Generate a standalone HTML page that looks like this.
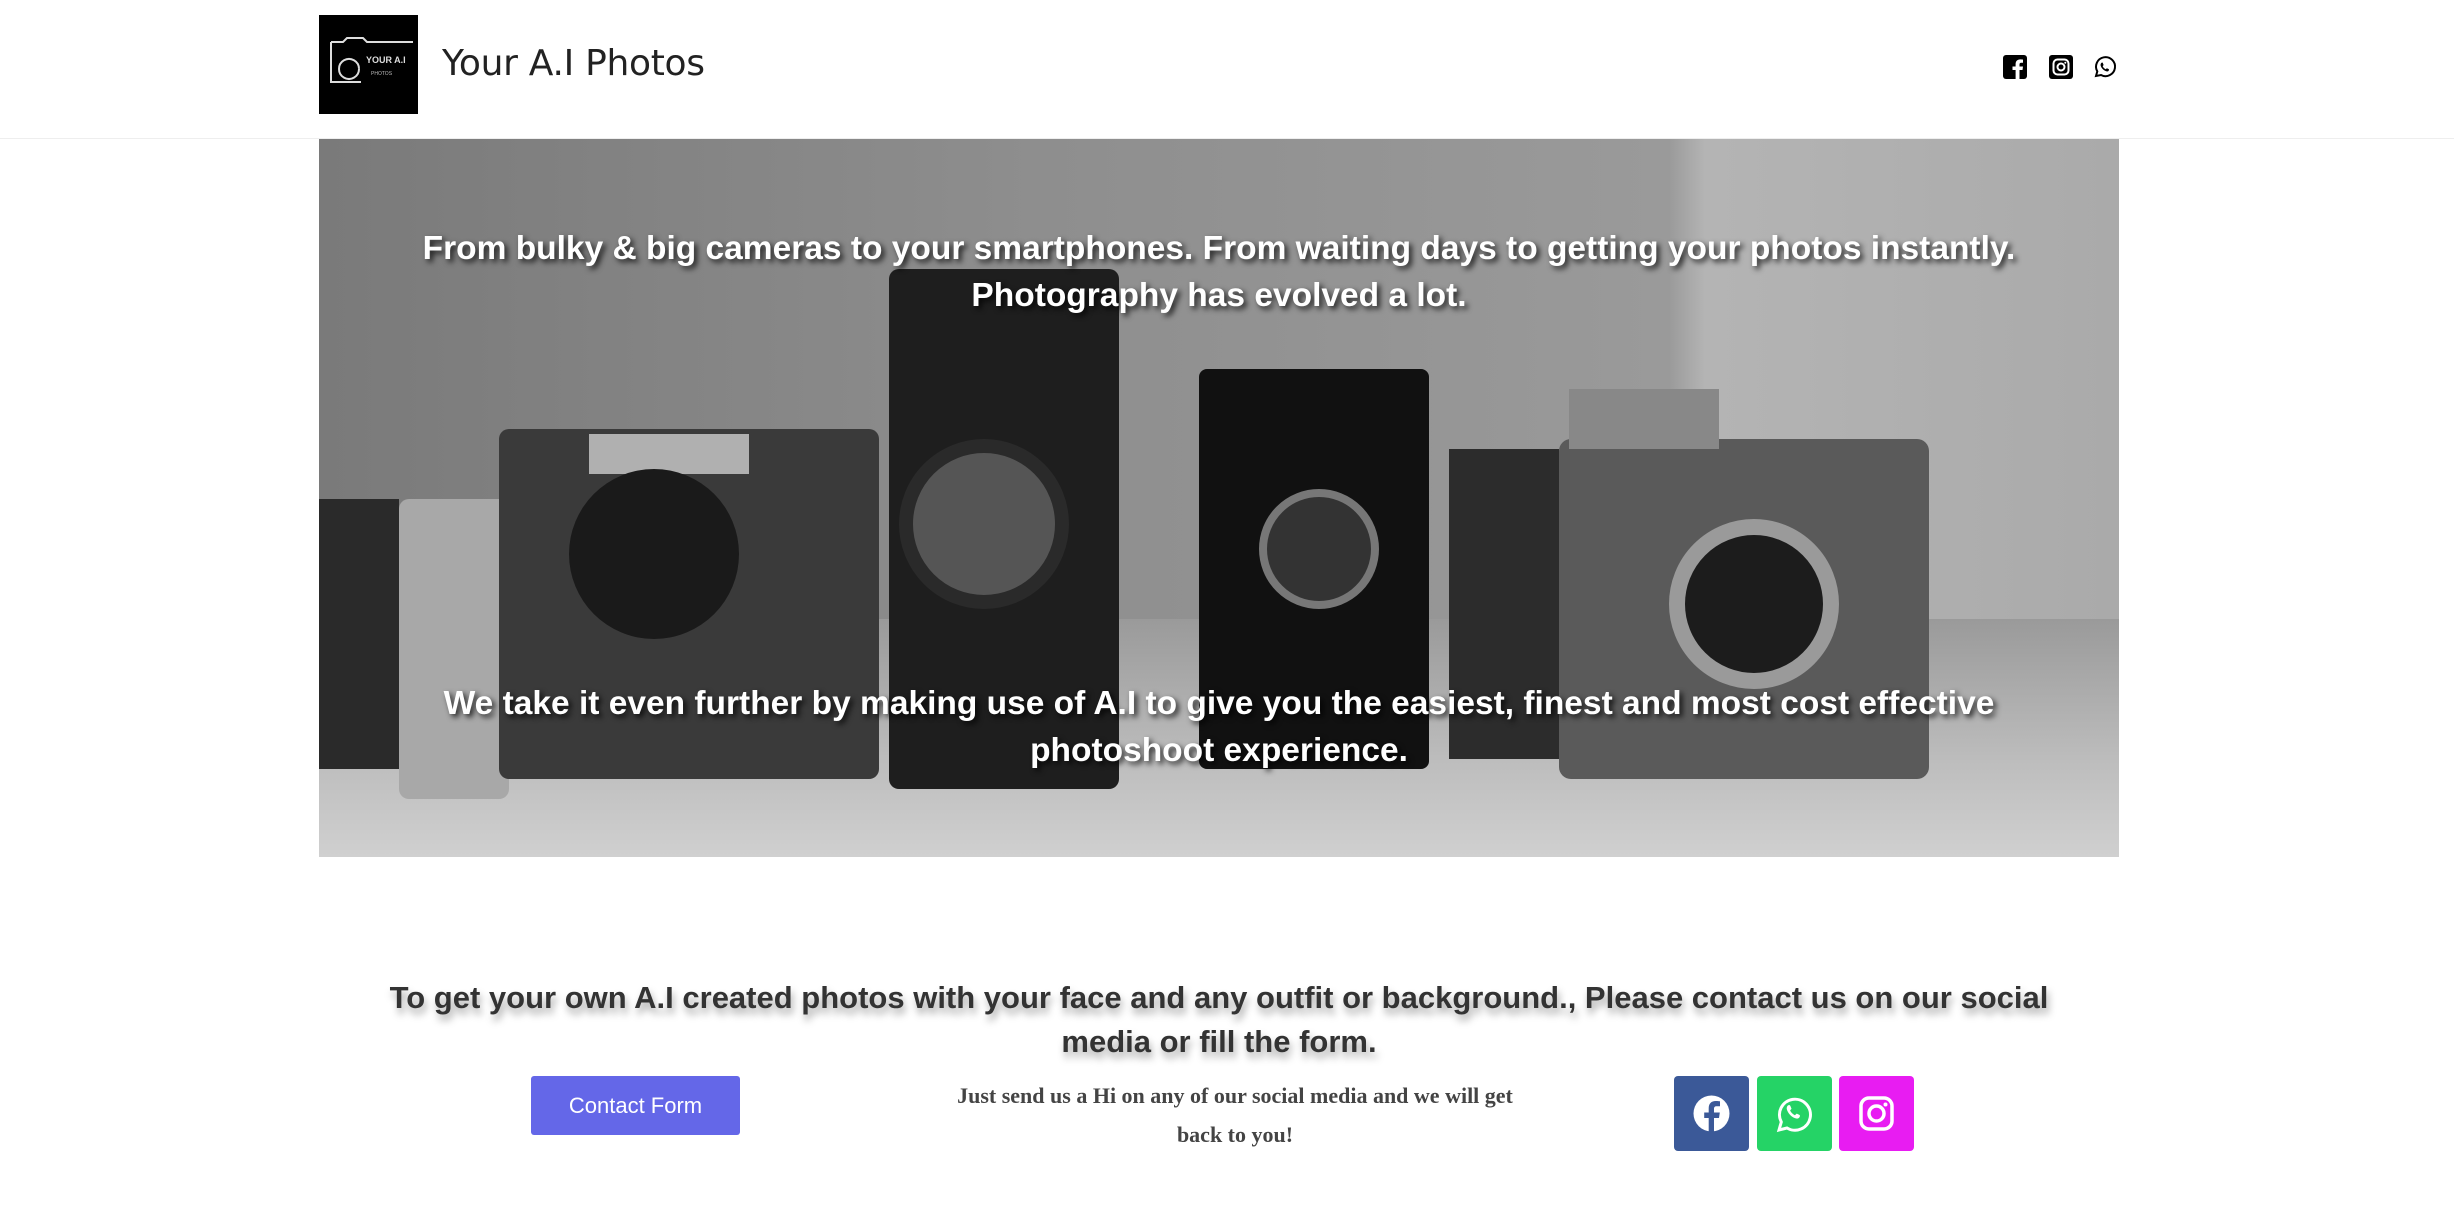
<!DOCTYPE html>
<html><head><meta charset="utf-8"><style>
*{margin:0;padding:0;box-sizing:border-box}
body{width:2454px;height:1219px;background:#fff;position:relative;overflow:hidden;font-family:"Liberation Sans",sans-serif}
.abs{position:absolute}
.hero{left:319px;top:139px;width:1800px;height:718px;overflow:hidden;
background:linear-gradient(90deg,#7a7a7a 0%,#8e8e8e 40%,#9a9a9a 75%,#b4b4b4 77%,#aaaaaa 100%)}
.ht{color:#fff;font-weight:bold;font-size:33.5px;line-height:47px;text-align:center;text-shadow:3px 3px 6px rgba(0,0,0,.8)}
.st{color:#333;font-weight:bold;font-size:31px;line-height:44px;text-align:center;text-shadow:2px 6px 8px rgba(0,0,0,.35)}
</style></head><body>
<div class="abs" style="left:319px;top:15px;width:99px;height:99px;background:#000">
<svg width="99" height="99" viewBox="0 0 99 99"><path d="M12 27h12l4-4h16l4 4h46M12 27v40h30M40 54a10 10 0 1 1 0-.1" stroke="#ddd" stroke-width="2" fill="none"/><text x="47" y="48" fill="#ddd" font-size="9" font-weight="bold" font-family="Liberation Sans">YOUR A.I</text><text x="52" y="60" fill="#bbb" font-size="5" font-family="Liberation Sans">PHOTOS</text></svg></div>
<div class="abs" style="left:442px;top:43px;font-size:36px;color:#222;font-family:'DejaVu Sans',sans-serif;letter-spacing:-0.3px">Your A.I Photos</div>
<svg class="abs" style="left:2003px;top:55px" width="24" height="24" viewBox="0 0 24 24"><rect width="24" height="24" rx="3"/><path d="M16.5 24v-9h3l.5-3.5h-3.5V9.5c0-1 .4-1.7 1.8-1.7H20V4.6c-.4 0-1.5-.2-2.8-.2-2.8 0-4.6 1.7-4.6 4.8v2.3H9.5V15h3.1v9z" fill="#fff"/></svg>
<svg class="abs" style="left:2049px;top:55px" width="24" height="24" viewBox="0 0 24 24"><rect width="24" height="24" rx="3"/><rect x="4.5" y="4.5" width="15" height="15" rx="4" fill="none" stroke="#fff" stroke-width="2"/><circle cx="12" cy="12" r="3.5" fill="none" stroke="#fff" stroke-width="2"/><circle cx="16.3" cy="7.7" r="1" fill="#fff"/></svg>
<svg class="abs" style="left:2093px;top:55px" width="24" height="24" viewBox="0 0 24 24"><path d="M3 21l1.3-4.6A9.5 9.5 0 1 1 8 20z" fill="none" stroke="#000" stroke-width="2"/><path d="M9 7.5c.5 0 .8.3 1 1l.6 1.5-.9 1.2c.6 1.3 1.8 2.5 3 3l1.2-1 1.6.8c.5.3.6.6.4 1.2-.4 1-1.3 1.4-2.3 1.2-2.8-.6-5.4-3.4-6-6-.2-1 .3-2.5 1.4-2.9z" fill="#000"/></svg>
<div class="abs" style="left:0;top:138px;width:2454px;height:1px;background:#eee"></div>
<div class="abs hero">
<div class="abs" style="left:0;top:480px;width:1800px;height:238px;background:linear-gradient(180deg,#9a9a9a,#bdbdbd 60%,#d0d0d0)"></div>
<div class="abs" style="left:0;top:360px;width:80px;height:270px;background:#2a2a2a"></div>
<div class="abs" style="left:80px;top:360px;width:110px;height:300px;background:#a8a8a8;border-radius:10px"></div>
<div class="abs" style="left:180px;top:290px;width:380px;height:350px;background:#3a3a3a;border-radius:10px"></div>
<div class="abs" style="left:270px;top:295px;width:160px;height:40px;background:#b0b0b0"></div>
<div class="abs" style="left:250px;top:330px;width:170px;height:170px;background:#1a1a1a;border-radius:50%"></div>
<div class="abs" style="left:570px;top:130px;width:230px;height:520px;background:#1e1e1e;border-radius:10px"></div>
<div class="abs" style="left:580px;top:300px;width:170px;height:170px;background:#555;border-radius:50%;border:14px solid #2a2a2a"></div>
<div class="abs" style="left:880px;top:230px;width:230px;height:400px;background:#111;border-radius:8px"></div>
<div class="abs" style="left:940px;top:350px;width:120px;height:120px;background:#333;border-radius:50%;border:8px solid #777"></div>
<div class="abs" style="left:1130px;top:310px;width:110px;height:310px;background:#2c2c2c"></div>
<div class="abs" style="left:1240px;top:300px;width:370px;height:340px;background:#5a5a5a;border-radius:12px"></div>
<div class="abs" style="left:1350px;top:380px;width:170px;height:170px;background:#1c1c1c;border-radius:50%;border:16px solid #9a9a9a"></div>
<div class="abs" style="left:1250px;top:250px;width:150px;height:60px;background:#888"></div>
</div>
<div class="abs ht" style="left:319px;top:225px;width:1800px">From bulky &amp; big cameras to your smartphones. From waiting days to getting your photos instantly.<br>Photography has evolved a lot.</div>
<div class="abs ht" style="left:319px;top:680px;width:1800px">We take it even further by making use of A.I to give you the easiest, finest and most cost effective<br>photoshoot experience.</div>
<div class="abs st" style="left:319px;top:976px;width:1800px">To get your own A.I created photos with your face and any outfit or background., Please contact us on our social<br>media or fill the form.</div>
<div class="abs" style="left:531px;top:1076px;width:209px;height:59px;background:#6467e8;border-radius:3px;color:#fff;font-size:22px;text-align:center;line-height:59px">Contact Form</div>
<div class="abs" style="left:900px;top:1076px;width:670px;text-align:center;font-family:'Liberation Serif',serif;font-weight:bold;font-size:22px;line-height:39px;color:#444">Just send us a Hi on any of our social media and we will get<br>back to you!</div>
<div class="abs" style="left:1674px;top:1076px;width:75px;height:75px;background:#3b5998;border-radius:4px"><svg width="75" height="75" viewBox="0 0 75 75"><circle cx="37.5" cy="37.5" r="18" fill="#fff"/><path d="M40 56V42h5l.8-5.5H40v-3.6c0-1.6.6-2.6 2.8-2.6H46v-5c-.6-.1-2.4-.3-4.3-.3-4.3 0-7 2.5-7 7.3v4.2h-4.5V42h4.5v14z" fill="#3b5998"/></svg></div>
<div class="abs" style="left:1757px;top:1076px;width:75px;height:75px;background:#25d366;border-radius:4px"><svg width="75" height="75" viewBox="0 0 75 75"><path d="M22 54l2.3-8A15.5 15.5 0 1 1 30 52z" fill="none" stroke="#fff" stroke-width="3"/><path d="M32 29c.8 0 1.2.5 1.5 1.3l1 2.4-1.4 1.8c1 2 2.8 3.800 4.8 4.7l1.8-1.6 2.5 1.2c.8.4.9 1 .6 1.8-.6 1.5-2 2.2-3.6 1.9-4.4-1-8.5-5.3-9.4-9.4-.3-1.6.5-3.8 2.2-4.100z" fill="#fff"/></svg></div>
<div class="abs" style="left:1839px;top:1076px;width:75px;height:75px;background:#e81cf2;border-radius:4px"><svg width="75" height="75" viewBox="0 0 75 75"><rect x="22" y="22" width="31" height="31" rx="8" fill="none" stroke="#fff" stroke-width="3.5"/><circle cx="37.5" cy="37.5" r="7.5" fill="none" stroke="#fff" stroke-width="3.5"/><circle cx="46.5" cy="28.5" r="2" fill="#fff"/></svg></div>
</body></html>
